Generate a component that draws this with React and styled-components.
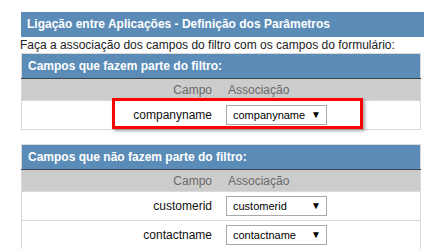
import React from 'react';
import styled, { createGlobalStyle } from 'styled-components';

const GlobalStyle = createGlobalStyle`
body {
  margin: 0;
  background: #ffffff;
  font-family: "Liberation Sans", Arial, sans-serif;
}
`;

const Page = styled.div`
position: relative;
padding: 12px 0 0 21px;
width: 403px;
`;

const TitleBar = styled.div`
background: #5b8cb7;
color: #ffffff;
font-size: 12px;
font-weight: 700;
height: 25px;
line-height: 25px;
padding-left: 6px;
`;

const Intro = styled.div`
color: #222222;
font-size: 12px;
line-height: 16px;
margin-left: -1px;
`;

const FieldTable = styled.table`
width: 400px;
border-collapse: collapse;
border: 1px solid #d9d9d9;
margin-bottom: ${props => props.gap || 0}px;
font-size: 12px;
`;

const SectionHead = styled.th`
background: #5b8cb7;
color: #ffffff;
font-weight: 700;
text-align: left;
height: 24px;
padding: 0 0 0 6px;
border-bottom: 1px solid #3d4650;
`;

const ColHead = styled.th`
background: #cccccc;
color: #6a6a6a;
font-weight: 400;
height: 21px;
padding: 0 ${props => (props.right ? '9px' : '0')} 0 ${props => (props.right ? '0' : '7px')};
text-align: ${props => (props.right ? 'right' : 'left')};
width: 50%;
`;

const Row = styled.tr`
border-top: 1px solid #d9d9d9;
`;

const Cell = styled.td`
color: #111111;
height: 28px;
padding: 0 ${props => (props.right ? '9px' : '0')} 0 ${props => (props.right ? '0' : '5px')};
text-align: ${props => (props.right ? 'right' : 'left')};
`;

const SelectBox = styled.div`
display: flex;
align-items: center;
justify-content: space-between;
box-sizing: border-box;
width: 101px;
height: 20px;
border: 1px solid #a9a9a9;
background: #ffffff;
padding: 0 5px 0 6px;
font-size: 11px;
color: #000000;
`;

const Arrow = styled.span`
font-size: 10px;
line-height: 10px;
`;

const Highlight = styled.div`
position: absolute;
left: 112px;
top: 98px;
width: 251px;
height: 31px;
box-sizing: border-box;
border: 3px solid #ff0000;
box-shadow: 2px 2px 3px rgba(0, 0, 0, 0.35);
`;

function Select({ value }) {
  return (
    <SelectBox>
      <span>{value}</span>
      <Arrow>▼</Arrow>
    </SelectBox>
  );
}

function FieldSection({ title, fields, gap }) {
  return (
    <FieldTable gap={gap}>
      <thead>
        <tr>
          <SectionHead colSpan={2}>{title}</SectionHead>
        </tr>
        <tr>
          <ColHead right>Campo</ColHead>
          <ColHead>Associação</ColHead>
        </tr>
      </thead>
      <tbody>
        {fields.map(f => (
          <Row key={f}>
            <Cell right>{f}</Cell>
            <Cell>
              <Select value={f} />
            </Cell>
          </Row>
        ))}
      </tbody>
    </FieldTable>
  );
}

export default function App() {
  return (
    <Page>
      <GlobalStyle />
      <TitleBar>Ligação entre Aplicações - Definição dos Parâmetros</TitleBar>
      <Intro>Faça a associação dos campos do filtro com os campos do formulário:</Intro>
      <FieldSection title="Campos que fazem parte do filtro:" fields={['companyname']} gap={14} />
      <FieldSection title="Campos que não fazem parte do filtro:" fields={['customerid', 'contactname']} />
      <Highlight />
    </Page>
  );
}
